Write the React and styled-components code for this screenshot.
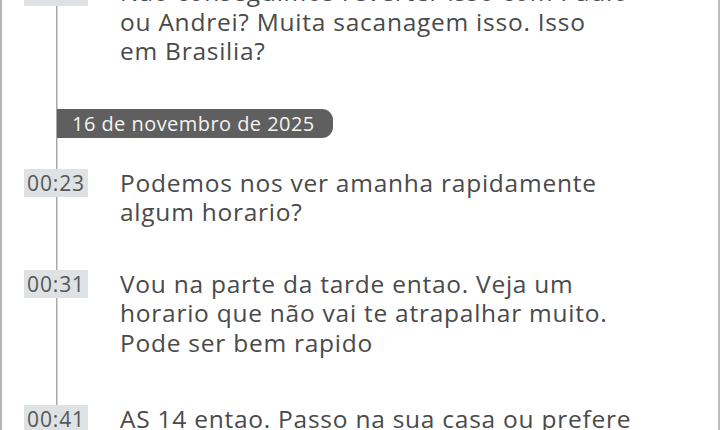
import React from "react";
import styled, { createGlobalStyle } from "styled-components";

const Global = createGlobalStyle`
  html, body { margin: 0; padding: 0; background: #ffffff; }
  body { font-family: "Open Sans", "Liberation Sans", sans-serif; }
`;

const Page = styled.div`
  box-sizing: border-box;
  width: 720px;
  height: 430px;
  overflow: hidden;
  background: #ffffff;
  border-left: 2px solid #b4b4b4;
  border-right: 2px solid #bcbcbc;
`;

const Timeline = styled.div`
  display: flex;
  flex-direction: column;
  margin-top: -23px;
  min-height: 480px;
  background: linear-gradient(#a9a9a9, #a9a9a9) no-repeat 54px 0 / 1.5px 100%;
`;

const Row = styled.div`
  display: grid;
  grid-template-columns: 64px 1fr;
  column-gap: 32px;
  align-items: start;
  padding-left: 22px;
  margin-bottom: ${(p) => p.$after || 0}px;
`;

const Time = styled.div`
  height: 28px;
  margin-top: 1px;
  background: #dee2e5;
  color: #555759;
  font-size: 21px;
  line-height: 28px;
  text-align: center;
  letter-spacing: 0.9px;
`;

const Text = styled.div`
  color: #4a4a4a;
  font-size: 24.5px;
  line-height: 29.5px;
  letter-spacing: 0.75px;
  white-space: nowrap;
`;

const DateRow = styled.div`
  display: flex;
  padding-left: 55px;
  margin-bottom: 30px;
`;

const DatePill = styled.div`
  height: 29px;
  padding: 0 18px 0 15px;
  background: #5f5f5f;
  color: #f3f3f3;
  font-size: 20px;
  line-height: 29px;
  border-radius: 0 11px 11px 0;
  letter-spacing: 0.45px;
`;

export default function App() {
  return (
    <>
      <Global />
      <Page>
        <Timeline>
          <Row $after={43}>
            <Time>00:12</Time>
            <Text>
              Não conseguimos reverter isso com Paulo
              <br />
              ou Andrei? Muita sacanagem isso. Isso
              <br />
              em Brasilia?
            </Text>
          </Row>
          <DateRow>
            <DatePill>16 de novembro de 2025</DatePill>
          </DateRow>
          <Row $after={42}>
            <Time>00:23</Time>
            <Text>
              Podemos nos ver amanha rapidamente
              <br />
              algum horario?
            </Text>
          </Row>
          <Row $after={47}>
            <Time>00:31</Time>
            <Text>
              Vou na parte da tarde entao. Veja um
              <br />
              horario que não vai te atrapalhar muito.
              <br />
              Pode ser bem rapido
            </Text>
          </Row>
          <Row>
            <Time>00:41</Time>
            <Text>
              AS 14 entao. Passo na sua casa ou prefere
              <br />
              outro lugar?
            </Text>
          </Row>
        </Timeline>
      </Page>
    </>
  );
}
